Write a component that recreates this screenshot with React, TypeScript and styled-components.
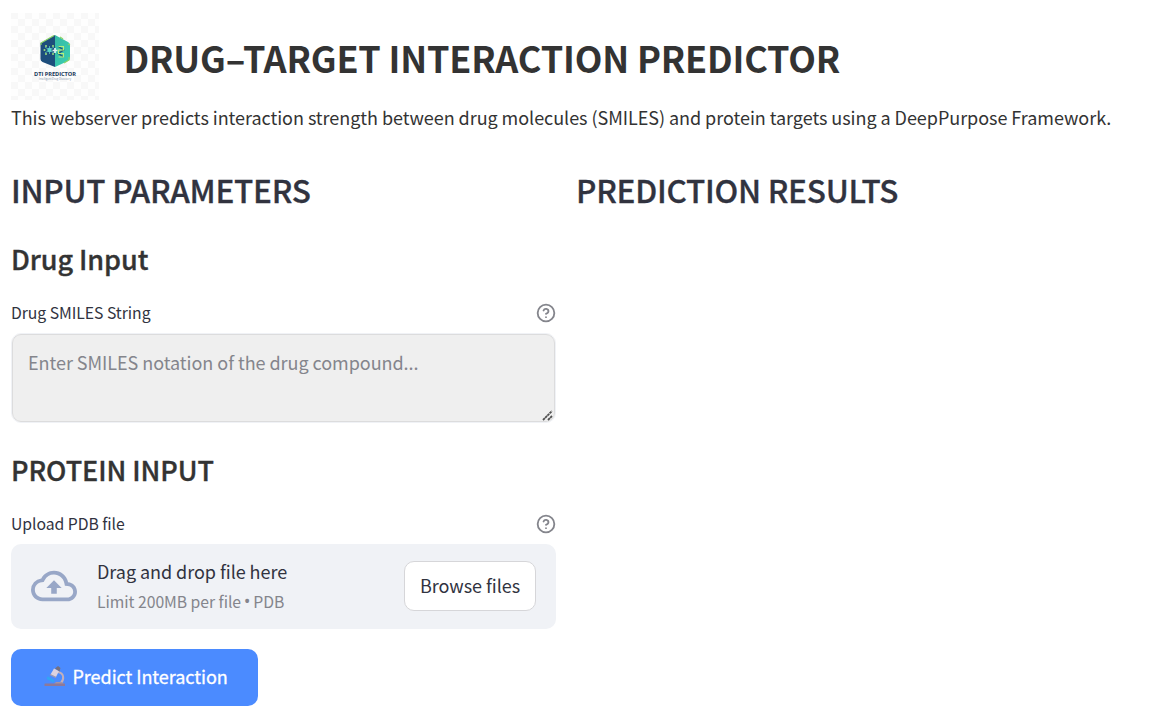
import React from "react";
import styled, { createGlobalStyle } from "styled-components";

const GlobalStyle = createGlobalStyle`
  *, *::before, *::after { box-sizing: border-box; }
  body {
    margin: 0;
    background: #fff;
    color: #31333f;
    font-family: "Source Sans Pro", "Noto Sans CJK SC", sans-serif;
    font-size: 18px;
    letter-spacing: -0.045px;
    overflow: hidden;
  }
  h1, h2, h3, p { margin: 0; }
  button, textarea { font: inherit; letter-spacing: inherit; }
`;

const Page = styled.main`
  height: 725px;
  padding: 12px 25px 0 11px;
`;

const Header = styled.header`
  display: flex;
  align-items: center;
  gap: 24.5px;
  height: 88px;
`;

const Logo = styled.svg`
  display: block;
  flex: none;
`;

const Title = styled.h1`
  font-size: 36px;
  font-weight: 700;
  line-height: 48px;
  letter-spacing: -0.2px;
  color: #333;
  white-space: nowrap;
  padding-top: 1px;
`;

const Description = styled.p`
  line-height: 32px;
  margin-top: 1px;
  color: #333;
  white-space: nowrap;
`;

const Columns = styled.div`
  display: grid;
  grid-template-columns: 545px 545px;
  gap: 20px;
  padding-top: 34px;
`;

const Column = styled.section`
  display: flex;
  flex-direction: column;
`;

const Heading = styled.h2`
  font-size: 31.5px;
  font-weight: 500;
  line-height: 44px;
  letter-spacing: -0.25px;
  -webkit-text-stroke: 0.3px currentColor;
  white-space: nowrap;
`;

const Subheading = styled.h3<{ $top: number }>`
  font-size: 27px;
  font-weight: 500;
  line-height: 36px;
  letter-spacing: -0.06px;
  -webkit-text-stroke: 0.35px currentColor;
  margin-top: ${(p) => p.$top}px;
  color: #333;
`;

const LabelRow = styled.div`
  display: flex;
  align-items: center;
  justify-content: space-between;
  height: 24px;
  margin: 24px 0 8px;
  font-size: 15.75px;
  line-height: 24px;
`;

const InputFrame = styled.div`
  position: relative;
  height: 90px;
  border: 1px solid #f0f2f6;
  border-radius: 10px;
`;

const SmilesInput = styled.textarea`
  display: block;
  width: 100%;
  height: 88px;
  padding: 12px 15px;
  border: 1px solid #dcdcdd;
  border-radius: 9px;
  background: #efefef;
  line-height: 30px;
  outline: none;
  resize: none;
  &::placeholder { color: #84858c; opacity: 1; }
`;

const ResizeGrip = styled.svg`
  position: absolute;
  right: 2px;
  bottom: 1px;
  pointer-events: none;
`;

const Dropzone = styled.div`
  display: flex;
  align-items: center;
  height: 85px;
  padding: 0 20px 2px;
  border-radius: 10px;
  background: #f0f2f6;
`;

const DropText = styled.div`
  flex: 1;
  margin-left: 20px;
`;

const DropTitle = styled.p`
  line-height: 30px;
`;

const DropHint = styled.p`
  font-size: 15.75px;
  line-height: 26px;
  margin-top: 3px;
  color: #84858c;
`;

const Bullet = styled.span`
  font-family: "Open Sans", sans-serif;
  font-size: 18px;
  line-height: 1;
  margin: 0 -0.75px;
`;

const BrowseButton = styled.button`
  width: 132px;
  height: 50px;
  padding: 0 0 2px;
  border: 1px solid #d6d6d9;
  border-radius: 10px;
  background: #fff;
  color: #31333f;
`;

const PredictButton = styled.button`
  display: flex;
  align-items: center;
  width: 247px;
  height: 57px;
  margin-top: 20px;
  padding: 0 0 3px 33px;
  gap: 6.5px;
  border: 0;
  border-radius: 10px;
  background: #4b8bff;
  color: #fff;
  font-weight: 400;
  -webkit-text-stroke: 0.3px currentColor;
  white-space: nowrap;
`;

const HelpIcon = () => (
  <svg width="20" height="20" viewBox="0 0 24 24" fill="none" stroke="#84858c" strokeWidth="2.2" strokeLinecap="round" strokeLinejoin="round">
    <circle cx="12" cy="12" r="10" />
    <path d="M9.09 9a3 3 0 0 1 5.83 1c0 2-3 3-3 3" />
    <path d="M12 17h.01" />
  </svg>
);

const CloudIcon = () => (
  <svg width="46" height="46" viewBox="0 0 24 24" fill="#98a7c7">
    <path d="M19.35 10.04A7.49 7.49 0 0 0 12 4C9.11 4 6.6 5.64 5.35 8.04A5.994 5.994 0 0 0 0 14c0 3.31 2.69 6 6 6h13c2.76 0 5-2.24 5-5 0-2.64-2.05-4.78-4.65-4.96zM19 18H6c-2.21 0-4-1.79-4-4 0-2.05 1.53-3.76 3.56-3.97l1.07-.11.5-.95A5.469 5.469 0 0 1 12 6c2.62 0 4.88 1.86 5.39 4.43l.3 1.5 1.53.11A2.98 2.98 0 0 1 22 15c0 1.65-1.35 3-3 3zM8 13h2.55v3h2.9v-3H16l-4-4z" />
  </svg>
);

const Microscope = () => (
  <svg width="22" height="22" viewBox="0 0 22 22" fill="none">
    <path d="M14 7c6 1 6.500 7 3 11" stroke="#c2afbc" strokeWidth="2" />
    <path d="M3 12.500l7 4" stroke="#32a4f4" strokeWidth="2.600" />
    <path d="M6.500 9.500L10 3.500l5 2.500-3 6z" fill="#dcd2e0" />
    <path d="M11 3.500L14 1l2.500 2-1 3.500z" fill="#77717f" />
    <path d="M6 9.500l6 3" stroke="#a59cac" strokeWidth="1.300" />
    <path d="M12 17h6l2 2H10z" fill="#a395a7" />
    <rect x="0.500" y="18.500" width="20.500" height="2.500" rx=".5" fill="#8e7998" />
  </svg>
);

const LogoMark = () => (
  <Logo width="88" height="88" viewBox="0 0 88 88">
    <defs>
      <pattern id="checks" width="14" height="14" patternUnits="userSpaceOnUse">
        <rect width="14" height="14" fill="#fefefe" />
        <path d="M0 0h7v7H0zM7 7h7v7H7z" fill="#f8f8f8" />
      </pattern>
      <linearGradient id="teal" x1="0" y1="0" x2="1" y2="1">
        <stop offset="0" stopColor="#35b9a5" />
        <stop offset="1" stopColor="#3bd0b2" />
      </linearGradient>
    </defs>
    <rect y="1" width="88" height="87" fill="url(#checks)" />
    <path d="M44 23L29.500 31v16q0 2 2 3L44 55z" fill="#1d4e7c" />
    <path d="M44 23l13 7q2 1 2 3v13q0 2-2 3l-13 6z" fill="url(#teal)" />
    <path d="M30 33v-2l13-7.500M49 25l3 2M57 32l2 1M58 45v3l-5 3" stroke="#8bd565" strokeWidth="1.200" fill="none" />
    <path d="M38.500 34v8M34 35l9 6M34 41l9-6" stroke="#5fc5bd" strokeWidth=".8" />
    <circle cx="38.500" cy="38" r="2.200" fill="#55d5ca" />
    <g fill="#9de07b">
      <circle cx="33.500" cy="38" r="1" />
      <circle cx="35" cy="34" r="1" />
      <circle cx="35" cy="42" r="1" />
      <circle cx="42" cy="34" r="1" />
      <circle cx="42" cy="42" r="1" />
    </g>
    <path d="M44 36v5M41.500 38.500h5" stroke="#e2f4f5" strokeWidth="1.700" />
    <path d="M47.500 34.500l5 3.500-5 3.500 5 3.500" stroke="#20587f" strokeWidth="1.500" fill="none" />
    <path d="M47.500 34.500h5v3.500l-5 0v3.500h5v3.500h-5" stroke="#b9ec79" strokeWidth="1.100" fill="none" />
    <text x="44" y="64" textAnchor="middle" fontFamily="Open Sans, sans-serif" fontSize="5.600" fontWeight="700" fill="#20385a" textLength="42" lengthAdjust="spacingAndGlyphs">DTI PREDICTOR</text>
    <text x="44" y="67.800" textAnchor="middle" fontFamily="Open Sans, sans-serif" fontSize="2.800" fill="#8294a9" textLength="32" lengthAdjust="spacingAndGlyphs">Intelligent Drug Discovery</text>
  </Logo>
);

export default function App() {
  return (
    <>
      <GlobalStyle />
      <Page>
        <Header>
          <LogoMark />
          <Title>DRUG–TARGET INTERACTION PREDICTOR</Title>
        </Header>
        <Description>
          This webserver predicts interaction strength between drug molecules (SMILES) and protein targets using a DeepPurpose Framework.
        </Description>
        <Columns>
          <Column>
            <Heading>INPUT PARAMETERS</Heading>
            <Subheading $top={30}>Drug Input</Subheading>
            <LabelRow>
              Drug SMILES String
              <HelpIcon />
            </LabelRow>
            <InputFrame>
              <SmilesInput placeholder="Enter SMILES notation of the drug compound..." />
              <ResizeGrip width="11" height="11" viewBox="0 0 11 11" stroke="#505050" strokeWidth="1.8" strokeDasharray="2.6 .5">
                <path d="M1 10L10 1M6 10l4-4" />
              </ResizeGrip>
            </InputFrame>
            <Subheading $top={29}>PROTEIN INPUT</Subheading>
            <LabelRow>
              Upload PDB file
              <HelpIcon />
            </LabelRow>
            <Dropzone>
              <CloudIcon />
              <DropText>
                <DropTitle>Drag and drop file here</DropTitle>
                <DropHint>Limit 200MB per file <Bullet>•</Bullet> PDB</DropHint>
              </DropText>
              <BrowseButton>Browse files</BrowseButton>
            </Dropzone>
            <PredictButton>
              <Microscope />
              Predict Interaction
            </PredictButton>
          </Column>
          <Column>
            <Heading>PREDICTION RESULTS</Heading>
          </Column>
        </Columns>
      </Page>
    </>
  );
}
